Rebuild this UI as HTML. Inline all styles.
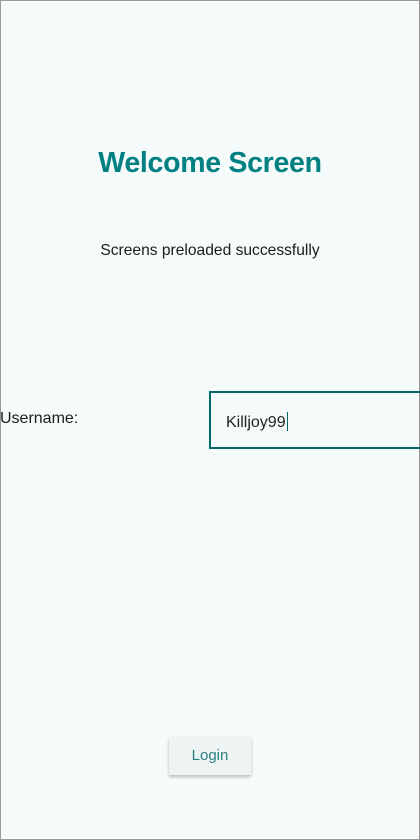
<!DOCTYPE html>
<html><head><style>
html,body{margin:0;padding:0}
body{width:420px;height:840px;background:#f5fafa;position:relative;overflow:hidden;font-family:"Liberation Sans",sans-serif;box-sizing:border-box;border:1px solid #9a9a9a}
.t{position:absolute;left:-1px;width:420px;text-align:center}
</style></head><body>
<div class="t" style="top:146px;font-size:28.5px;font-weight:bold;color:#008080;letter-spacing:-0.3px">Welcome Screen</div>
<div class="t" style="top:241px;font-size:15.6px;color:#1c1c1c">Screens preloaded successfully</div>
<div style="position:absolute;left:-1px;top:409px;font-size:16px;color:#1c1c1c">Username:</div>
<div style="position:absolute;left:208px;top:390px;width:215px;height:58px;box-sizing:border-box;border:2px solid #006868"></div>
<div style="position:absolute;left:225px;top:411px;font-size:16px;color:#222">Killjoy99<span style="display:inline-block;width:1px;height:19px;background:#006868;vertical-align:-4px;margin-left:1px"></span></div>
<div style="position:absolute;left:168px;top:736px;width:82px;height:38px;background:#eef4f4;box-shadow:0 2px 3px rgba(0,0,0,0.25);text-align:center;line-height:38px;font-size:15px;color:#2a8080">Login</div>
</body></html>
